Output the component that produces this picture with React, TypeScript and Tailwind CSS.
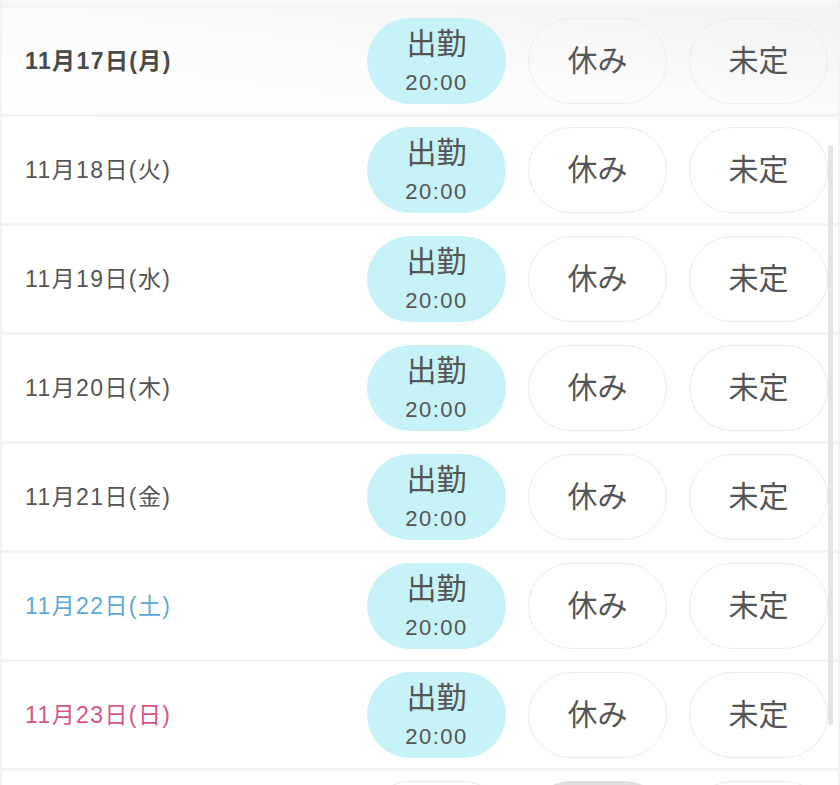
import React from 'react';

type Day = { label: string; tone: 'normal' | 'bold' | 'sat' | 'sun' };

const days: Day[] = [
  { label: '11月17日(月)', tone: 'bold' },
  { label: '11月18日(火)', tone: 'normal' },
  { label: '11月19日(水)', tone: 'normal' },
  { label: '11月20日(木)', tone: 'normal' },
  { label: '11月21日(金)', tone: 'normal' },
  { label: '11月22日(土)', tone: 'sat' },
  { label: '11月23日(日)', tone: 'sun' },
];

const toneClass: Record<Day['tone'], string> = {
  normal: 'text-[#555555]',
  bold: 'text-[#4a4a4a] font-bold',
  sat: 'text-[#5ba9d8]',
  sun: 'text-[#d9547f]',
};

const font = { fontFamily: '"Liberation Sans", "Noto Sans CJK JP", sans-serif' };

function Row({ day, first }: { day: Day; first?: boolean }) {
  return (
    <div
      className={`h-[106px] flex items-center pl-[23px] pr-[10px] ${
        first ? 'bg-gradient-to-bl from-[#f1f1f1] via-[#fbfbfb] to-white' : 'bg-white'
      }`}
    >
      <div className={`flex-1 text-[23px] tracking-[1.4px] leading-none ${toneClass[day.tone]}`}>{day.label}</div>
      <div className="flex gap-[22px]">
        <button className="w-[139px] h-[86px] rounded-full bg-[#c6f2f8] text-[#555555] flex flex-col items-center justify-center">
          <span className="text-[30px] leading-none">出勤</span>
          <span className="text-[22px] tracking-[1.5px] leading-none mt-[13px]">20:00</span>
        </button>
        <button className="w-[139px] h-[86px] rounded-full border border-[#ececec] text-[#555555] text-[30px] leading-none">
          休み
        </button>
        <button className="w-[139px] h-[86px] rounded-full border border-[#ececec] text-[#555555] text-[30px] leading-none">
          未定
        </button>
      </div>
    </div>
  );
}

export default function App() {
  return (
    <div className="relative w-[840px] h-[785px] overflow-hidden bg-[#f3f3f3] px-[2px]" style={font}>
      <div className="flex flex-col gap-[3px]">
        <div className="h-[5px] bg-[#f8f8f8]" />
        {days.map((d, i) => (
          <Row key={d.label} day={d} first={i === 0} />
        ))}
        {/* next row, cut off at the bottom */}
        <div className="h-[106px] bg-white flex items-start pl-[23px] pr-[10px] pt-[10px]">
          <div className="flex-1" />
          <div className="flex gap-[22px]">
            <div className="w-[139px] h-[86px] rounded-full border border-[#ececec]" />
            <div className="w-[139px] h-[86px] rounded-full bg-[#dedede]" />
            <div className="w-[139px] h-[86px] rounded-full border border-[#ececec]" />
          </div>
        </div>
      </div>
      {/* scrollbar */}
      <div className="absolute left-[828px] top-[145px] w-[5px] h-[580px] rounded-full bg-[#e4e4e4]" />
    </div>
  );
}
